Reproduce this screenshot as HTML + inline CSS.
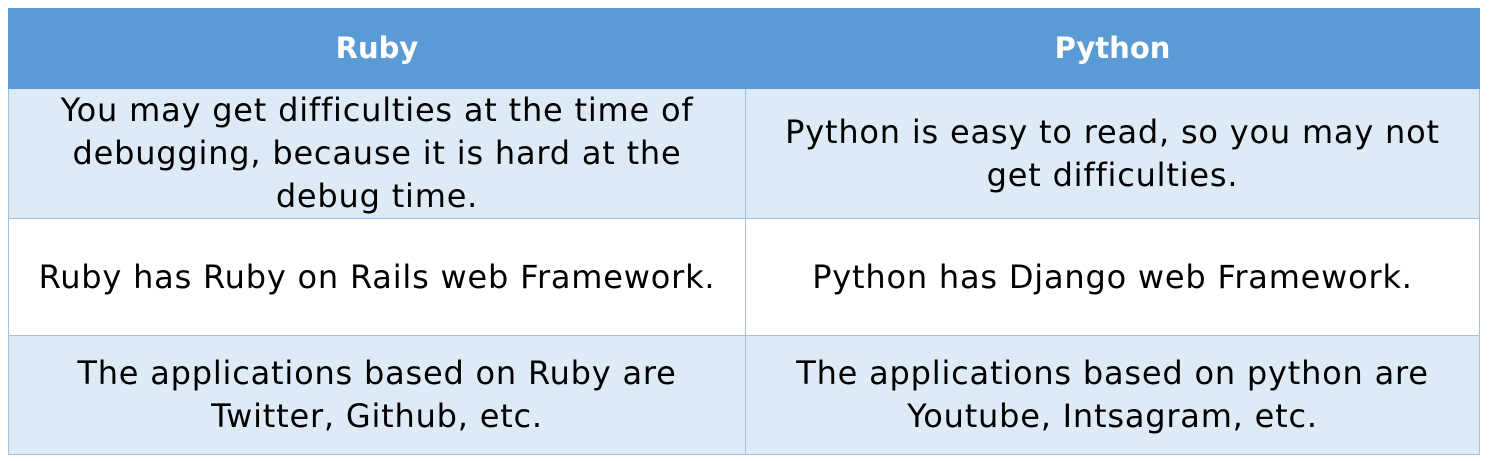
<!DOCTYPE html>
<html><head><style>
body{margin:0;background:#fff;width:1489px;height:461px;overflow:hidden}
.t{position:absolute;left:8px;top:8px;width:1472px;border-collapse:collapse;font-family:"DejaVu Sans","Liberation Sans",sans-serif;font-size:32px;letter-spacing:0.8px;color:#000}
td{border:1px solid #9dc3e6;text-align:center;vertical-align:middle;padding:0;line-height:43px;white-space:nowrap}
td:first-child{width:736px}
.h td{background:#5b9bd5;color:#fff;font-weight:bold;height:79px;border-color:#5b9bd5;font-size:29px;letter-spacing:0}
.a td{background:#deeaf6}
</style></head><body>
<table class="t">
<tr class="h"><td>Ruby</td><td>Python</td></tr>
<tr class="a" style="height:130px"><td>You may get difficulties at the time of<br>debugging, because it is hard at the<br>debug time.</td><td>Python is easy to read, so you may not<br>get difficulties.</td></tr>
<tr style="height:117px"><td>Ruby has Ruby on Rails web Framework.</td><td>Python has Django web Framework.</td></tr>
<tr class="a" style="height:119px"><td>The applications based on Ruby are<br>Twitter, Github, etc.</td><td>The applications based on python are<br>Youtube, Intsagram, etc.</td></tr>
</table>
</body></html>
